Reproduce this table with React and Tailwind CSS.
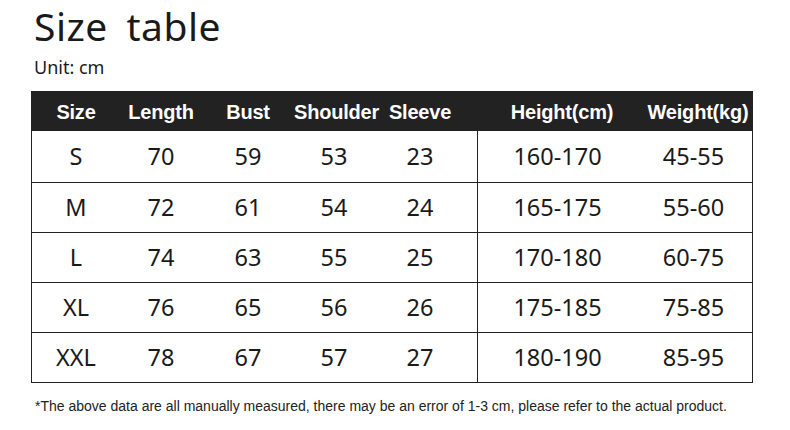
const rows = [
  ['S', '70', '59', '53', '23', '160-170', '45-55'],
  ['M', '72', '61', '54', '24', '165-175', '55-60'],
  ['L', '74', '63', '55', '25', '170-180', '60-75'],
  ['XL', '76', '65', '56', '26', '175-185', '75-85'],
  ['XXL', '78', '67', '57', '27', '180-190', '85-95'],
]

const leftCols = ['w-[88px]', 'w-[82px]', 'w-[92px]', 'w-[80px]', 'w-[92px]']
const rightCols = ['w-[159px]', 'w-[113px]']

function App() {
  return (
    <div className="h-[430px] w-[790px] bg-white text-[#1a1a1a]" style={{ fontFamily: '"Noto Sans", sans-serif' }}>
      <div className="pl-[34px] pt-0">
        <h1 className="text-[39px] leading-[52px] tracking-[0.5px] [word-spacing:8px]">Size table</h1>
        <p className="mt-[3px] text-[18px] leading-[24px]">Unit: cm</p>
      </div>

      <div className="ml-[31px] mt-[12px] w-[722px] border border-[#222]">
        <div
          className="flex h-[39px] items-center bg-[#222] text-[20px] font-bold tracking-[-0.2px] text-white"
          style={{ fontFamily: '"Liberation Sans", Arial, sans-serif' }}
        >
          <div className="w-[88px] text-center">Size</div>
          <div className="w-[82px] text-center">Length</div>
          <div className="w-[92px] text-center">Bust</div>
          <div className="w-[80px] text-center">Shoulder</div>
          <div className="w-[92px] text-center">Sleeve</div>
          <div className="w-[13px]" />
          <div className="w-[166px] text-center">Height(cm)</div>
          <div className="w-[106px] text-center">Weight(kg)</div>
        </div>
        {rows.map((row, i) => (
          <div key={row[0]} className={`flex h-[50px] text-[23.5px] ${i > 0 ? 'border-t border-[#222]' : 'h-[51px]'}`}>
            <div className="flex w-[446px] items-center border-r border-[#222]">
              {row.slice(0, 5).map((cell, j) => (
                <div key={j} className={`${leftCols[j]} text-center`}>
                  {cell}
                </div>
              ))}
            </div>
            <div className="flex flex-1 items-center">
              {row.slice(5).map((cell, j) => (
                <div key={j} className={`${rightCols[j]} text-center`}>
                  {cell}
                </div>
              ))}
            </div>
          </div>
        ))}
      </div>

      <p
        className="ml-[35px] mt-[13px] text-[14px] text-[#222]"
        style={{ fontFamily: '"Liberation Sans", Arial, sans-serif' }}
      >
        *The above data are all manually measured, there may be an error of 1-3 cm, please refer to the actual product.
      </p>
    </div>
  )
}

export default App
